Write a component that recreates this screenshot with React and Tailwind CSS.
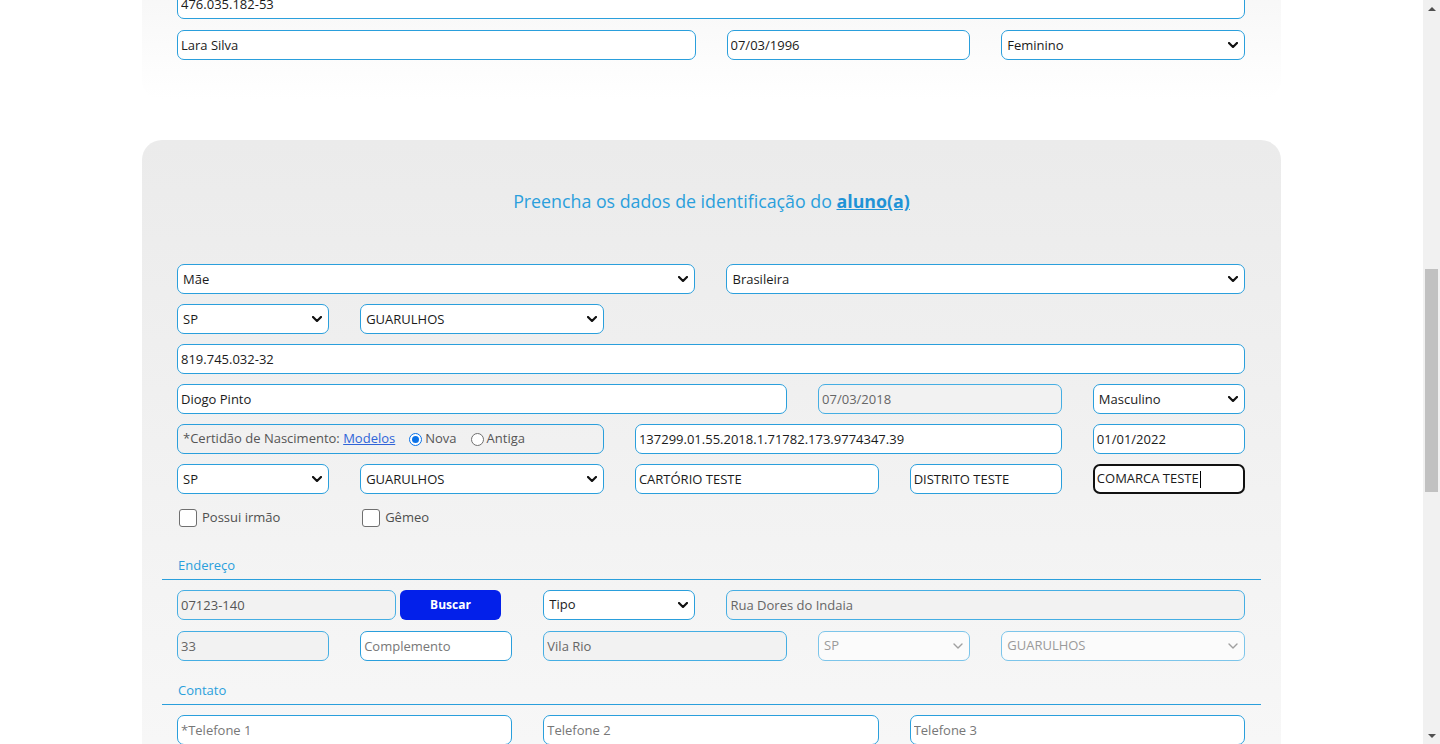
import React from 'react'

const FONT = { fontFamily: '"Open Sans", "Noto Sans", sans-serif' }

const SPAN = {
  2: 'col-span-2',
  3: 'col-span-3',
  4: 'col-span-4',
  5: 'col-span-5',
  6: 'col-span-6',
  7: 'col-span-7',
  12: 'col-span-12',
}

const START = {
  3: 'col-start-3',
  5: 'col-start-5',
  7: 'col-start-7',
}

function Chevron({ muted }) {
  return (
    <svg
      viewBox="0 0 10 6"
      className="pointer-events-none absolute right-[7px] top-1/2 h-[6px] w-[10px] -translate-y-1/2"
      fill="none"
      stroke={muted ? '#a0a0a0' : '#111'}
      strokeWidth={muted ? 1.4 : 2.2}
      strokeLinecap="round"
      strokeLinejoin="round"
    >
      <path d="M1 1l4 4 4-4" />
    </svg>
  )
}

function Field({ span, start, value, placeholder, disabled }) {
  return (
    <div className={`${SPAN[span]} ${start ? START[start] : ''}`}>
      <input
        readOnly
        defaultValue={value}
        placeholder={placeholder}
        className={`h-[30px] w-full rounded-[7px] border px-[3px] text-[13px] outline-none placeholder:text-[#777] ${
          disabled
            ? 'border-[#45aee3] bg-[#f2f2f2] text-[#666]'
            : 'border-[#2a9fdc] bg-white text-[#1b1b1b]'
        }`}
      />
    </div>
  )
}

function Select({ span, start, value, disabled }) {
  return (
    <div className={`relative ${SPAN[span]} ${start ? START[start] : ''}`}>
      <select
        defaultValue={value}
        className={`h-[30px] w-full appearance-none rounded-[7px] border pl-[5px] pt-[1px] text-[13px] outline-none ${
          disabled
            ? 'border-[#7cc5ea] bg-[#fbfbfb] text-[#9a9a9a]'
            : 'border-[#2a9fdc] bg-white text-[#1b1b1b]'
        }`}
      >
        <option>{value}</option>
      </select>
      <Chevron muted={disabled} />
    </div>
  )
}

function Check({ label, start }) {
  return (
    <div className={`col-span-2 flex items-center gap-[5px] pl-[2px] pt-[4px] ${start ? START[start] : ''}`}>
      <span className="h-[18px] w-[18px] rounded-[3px] border border-[#6f6f6f] bg-white" />
      <span className="text-[13px] text-[#4f4f4f]">{label}</span>
    </div>
  )
}

function SectionTitle({ children, top }) {
  return (
    <div className={`${top} border-b border-[#2a9fdc] px-[16px] pb-[5px] text-[13px] leading-[18px] text-[#2a9fdc]`}>
      {children}
    </div>
  )
}

function Radio({ checked, label }) {
  return (
    <span className="flex items-center gap-[3px]">
      {checked ? (
        <span className="flex h-[13px] w-[13px] items-center justify-center rounded-full border-[1.5px] border-[#0b72e8] bg-white">
          <span className="h-[7px] w-[7px] rounded-full bg-[#0b72e8]" />
        </span>
      ) : (
        <span className="h-[13px] w-[13px] rounded-full border border-[#707070] bg-white" />
      )}
      <span>{label}</span>
    </span>
  )
}

function Scrollbar() {
  return (
    <div className="flex h-[744px] w-[17px] flex-col items-center bg-[#f1f1f1]">
      <div className="flex h-[17px] items-center justify-center">
        <span className="h-0 w-0 border-x-[4px] border-b-[4px] border-x-transparent border-b-[#505050]" />
      </div>
      <div className="h-[252px]" />
      <div className="h-[223px] w-[13px] bg-[#c1c1c1]" />
      <div className="flex-1" />
      <div className="flex h-[17px] items-center justify-center">
        <span className="h-0 w-0 border-x-[4px] border-t-[4px] border-x-transparent border-t-[#505050]" />
      </div>
    </div>
  )
}

export default function App() {
  return (
    <div className="flex h-[744px] w-[1440px] overflow-hidden bg-white" style={FONT}>
      <main className="flex-1 overflow-hidden">
        {/* previous block, scrolled past */}
        <section className="mx-auto w-[1139px] rounded-b-[20px] bg-gradient-to-b from-[#f7f7f7] to-white pb-[40px] pl-[35px] pr-[36px]">
          <div className="-mt-[11px] grid grid-cols-12 gap-x-[31px] gap-y-[11px]">
            <Field span={12} value="476.035.182-53" />
            <Field span={6} value="Lara Silva" />
            <Field span={3} value="07/03/1996" />
            <Select span={3} value="Feminino" />
          </div>
        </section>

        {/* aluno */}
        <section className="mx-auto mt-[40px] h-[900px] w-[1139px] rounded-[20px] bg-gradient-to-b from-[#ebebeb] to-[#fdfdfd] px-[20px]">
          <h2 className="pt-[48px] text-center text-[17.8px] leading-[26px] text-[#2a9fdc]">
            Preencha os dados de identificação do{' '}
            <span className="font-bold text-[#1f93d6] underline">aluno(a)</span>
          </h2>

          <div className="mt-[50px] grid grid-cols-12 gap-x-[31px] gap-y-[10px] pl-[15px] pr-[16px]">
            <Select span={6} value="Mãe" />
            <Select span={6} value="Brasileira" />

            <Select span={2} value="SP" />
            <Select span={3} value="GUARULHOS" />
            <div className="col-span-7" />

            <Field span={12} value="819.745.032-32" />

            <Field span={7} value="Diogo Pinto" />
            <Field span={3} value="07/03/2018" disabled />
            <Select span={2} value="Masculino" />

            <div className="col-span-5 flex h-[30px] items-center gap-[14px] rounded-[7px] border border-[#2a9fdc] px-[5px] text-[13px] text-[#555]">
              <span>
                *Certidão de Nascimento:{' '}
                <a className="text-[#2f64d8] underline">Modelos</a>
              </span>
              <Radio checked label="Nova" />
              <Radio label="Antiga" />
            </div>
            <Field span={5} value="137299.01.55.2018.1.71782.173.9774347.39" />
            <Field span={2} value="01/01/2022" />

            <Select span={2} value="SP" />
            <Select span={3} value="GUARULHOS" />
            <Field span={3} value="CARTÓRIO TESTE" />
            <Field span={2} value="DISTRITO TESTE" />
            <div className="col-span-2 flex h-[30px] items-center rounded-[7px] border-2 border-[#111] bg-white px-[2px] text-[13px] text-[#1b1b1b]">
              COMARCA TESTE
              <span className="ml-px h-[17px] w-px bg-black" />
            </div>

            <Check label="Possui irmão" />
            <Check label="Gêmeo" start={3} />
          </div>

          <SectionTitle top="mt-[28px]">Endereço</SectionTitle>
          <div className="mt-[10px] grid grid-cols-12 gap-x-[31px] gap-y-[11px] pl-[15px] pr-[16px]">
            <div className="col-span-4 flex h-[30px] gap-[4px]">
              <input
                readOnly
                defaultValue="07123-140"
                className="h-[30px] w-[219px] rounded-[7px] border border-[#45aee3] bg-[#f2f2f2] px-[3px] text-[13px] text-[#555] outline-none"
              />
              <button className="h-[30px] w-[101px] rounded-[6px] bg-[#0320ea] text-[12px] font-bold text-white">
                Buscar
              </button>
            </div>
            <Select span={2} value="Tipo" />
            <Field span={6} value="Rua Dores do Indaia" disabled />

            <Field span={2} value="33" disabled />
            <Field span={2} placeholder="Complemento" />
            <Field span={3} value="Vila Rio" disabled />
            <Select span={2} value="SP" disabled />
            <Select span={3} value="GUARULHOS" disabled />
          </div>

          <SectionTitle top="mt-[20px]">Contato</SectionTitle>
          <div className="mt-[10px] grid grid-cols-12 gap-x-[31px] gap-y-[11px] pl-[15px] pr-[16px]">
            <Field span={4} placeholder="*Telefone 1" />
            <Field span={4} placeholder="Telefone 2" />
            <Field span={4} placeholder="Telefone 3" />
          </div>
        </section>
      </main>
      <Scrollbar />
    </div>
  )
}
